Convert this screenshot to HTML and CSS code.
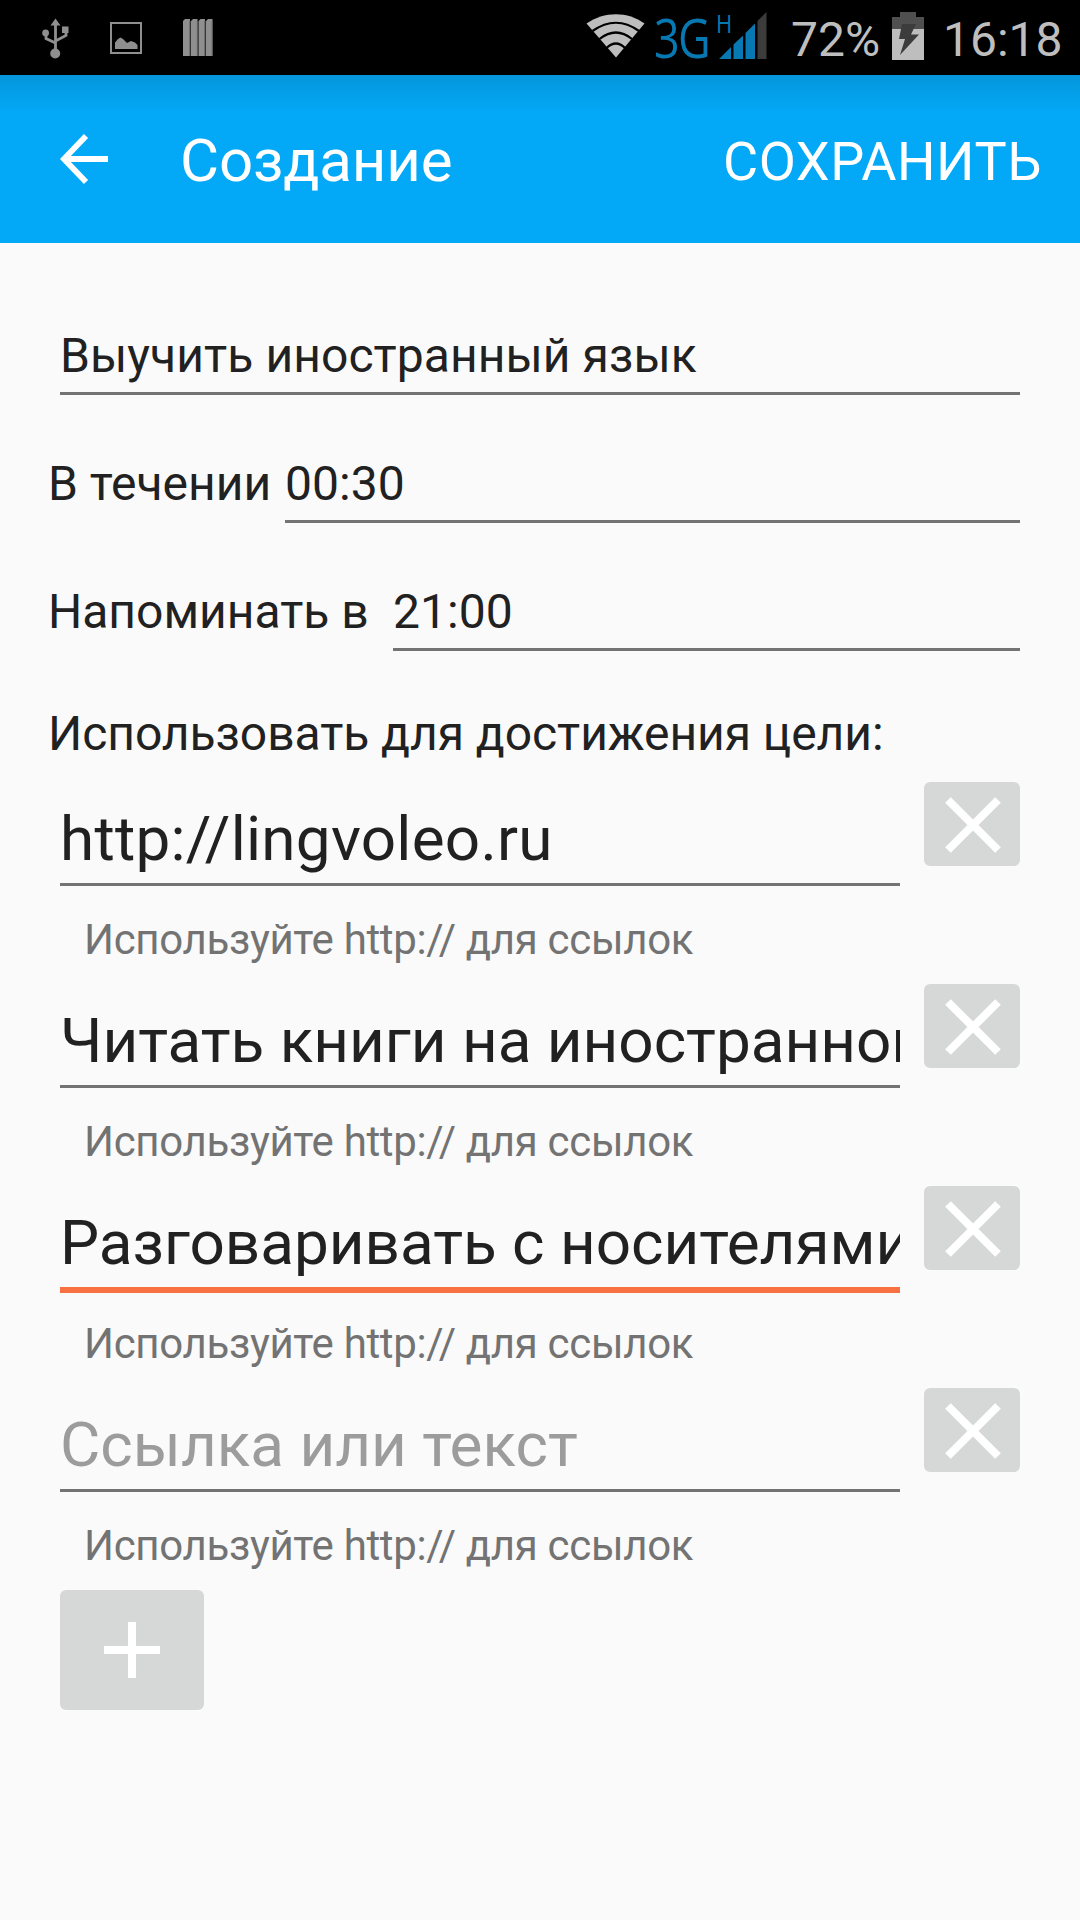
FILE: index.html
```html
<!DOCTYPE html>
<html lang="ru">
<head>
    <meta charset="UTF-8">
    <meta name="viewport" content="width=device-width, initial-scale=1.0">
    <title>Создание</title>
    <link rel="stylesheet" href="styles.css">
</head>
<body>
    <div class="status-bar">
        <svg class="icon-usb" width="28" height="42" viewBox="0 0 28 42">
            <path d="M13.5 38V6M13.5 25L4 20.500V14M13.500 23L24 17.500V12" fill="none" stroke="#8f8f8f" stroke-width="2.800"/>
            <path d="M13.500 0.500L18.500 7.500H8.500ZM20 8.500h6.500v6.500H20Z" fill="#8f8f8f"/>
            <circle cx="3.600" cy="15" r="3.400" fill="#8f8f8f"/>
            <circle cx="13.200" cy="35.500" r="5" fill="#8f8f8f"/>
        </svg>
        <svg class="icon-picture" width="32" height="32" viewBox="0 0 32 32">
            <rect x="1" y="1" width="30" height="30" fill="none" stroke="#8f8f8f" stroke-width="2"/>
            <path d="M5 27V20.500L8 17l2.500-1.500L13 17l4 4 4-2 4 1.500 2.500 2.500V27Z" fill="#8f8f8f"/>
        </svg>
        <svg class="icon-bars" width="30" height="38" viewBox="0 0 30 38">
            <path d="M0 37V2L2 0H7V37ZM8 37V2l2-2h4.500V37ZM15.500 37V2l2-2H22V37ZM23 37V2l2-2h4.500V37Z" fill="#8f8f8f"/>
            <path d="M7 2V37M14.500 2V37M22 2V37M29.300 2V37" stroke="#5c5c5c" stroke-width="1.200"/>
        </svg>
        <svg class="icon-wifi" width="60" height="44" viewBox="0 0 60 44">
            <path d="M30 43.500L0.500 9.500C18-3 42-3 58.500 9.500Z" fill="#bebebe"/>
            <path d="M6.500 17Q30 0.500 53 17M13.500 25Q30 12 46 25M20.500 34Q30 25 39 34" fill="none" stroke="#000" stroke-width="2.200"/>
        </svg>
        <span class="network">3G</span>
        <div class="signal">
            <span class="signal-type">H</span>
            <svg width="49" height="48" viewBox="0 0 49 48">
                <path d="M0 47L12 35V47ZM14.500 47V32.500L24 23.500V47ZM26.500 47V21L36 11.500V47Z" fill="#0878b2"/>
                <path d="M38.500 47V9L47.500 0V47Z" fill="#3c3c3c"/>
            </svg>
        </div>
        <span class="battery-level">72%</span>
        <svg class="icon-battery" width="32" height="48" viewBox="0 0 32 48">
            <path d="M8 0H24V5H32V17H0V5H8Z" fill="#4f4f4f"/>
            <rect y="17" width="32" height="31" fill="#bebebe"/>
            <path d="M10 12H24L19 22.500H27L8 43L13 27H7Z" fill="#3c3c3c"/>
        </svg>
        <span class="clock">16:18</span>
    </div>

    <header class="toolbar">
        <svg class="icon-back" width="48" height="50" viewBox="0 0 48 50">
            <path d="M48 25H5M26 2L4 25L26 48" fill="none" stroke="#fff" stroke-width="5.800"/>
        </svg>
        <h1 class="title">Создание</h1>
        <span class="save">СОХРАНИТЬ</span>
    </header>

    <main class="form">
        <div class="field">Выучить иностранный язык</div>

        <div class="row">
            <label class="row-label duration">В течении</label>
            <div class="field">00:30</div>
        </div>
        <div class="row">
            <label class="row-label reminder">Напоминать в</label>
            <div class="field">21:00</div>
        </div>

        <div class="section-label">Использовать для достижения цели:</div>

        <div class="item">
            <div class="item-text">
                <div class="field big link">http://lingvoleo.ru</div>
                <div class="hint">Используйте http:// для ссылок</div>
            </div>
            <div class="btn remove">
                <svg width="56" height="56" viewBox="0 0 56 56"><path d="M3 3L53 53M53 3L3 53" stroke="#fff" stroke-width="8"/></svg>
            </div>
        </div>
        <div class="item">
            <div class="item-text">
                <div class="field big">Читать книги на иностранном</div>
                <div class="hint">Используйте http:// для ссылок</div>
            </div>
            <div class="btn remove">
                <svg width="56" height="56" viewBox="0 0 56 56"><path d="M3 3L53 53M53 3L3 53" stroke="#fff" stroke-width="8"/></svg>
            </div>
        </div>
        <div class="item">
            <div class="item-text">
                <div class="field big focused">Разговаривать с носителями</div>
                <div class="hint">Используйте http:// для ссылок</div>
            </div>
            <div class="btn remove">
                <svg width="56" height="56" viewBox="0 0 56 56"><path d="M3 3L53 53M53 3L3 53" stroke="#fff" stroke-width="8"/></svg>
            </div>
        </div>
        <div class="item">
            <div class="item-text">
                <div class="field big placeholder">Ссылка или текст</div>
                <div class="hint">Используйте http:// для ссылок</div>
            </div>
            <div class="btn remove">
                <svg width="56" height="56" viewBox="0 0 56 56"><path d="M3 3L53 53M53 3L3 53" stroke="#fff" stroke-width="8"/></svg>
            </div>
        </div>

        <div class="btn add">
            <svg width="56" height="56" viewBox="0 0 56 56"><path d="M28 0V56M0 28H56" stroke="#fff" stroke-width="8"/></svg>
        </div>
    </main>
</body>
</html>
```
FILE: styles.css
```css
* { box-sizing: border-box; }
body { margin: 0; width: 1080px; height: 1920px; overflow: hidden; background: #fafafa; color: #212121; font-family: Roboto, sans-serif; font-size: 48px; line-height: 56px; white-space: nowrap; }
svg { display: block; flex: none; }

/* status bar */
.status-bar { display: flex; align-items: flex-start; height: 75px; padding-left: 42px; background: #000; color: #bebebe; }
.icon-usb { margin-top: 18px; }
.icon-picture { margin: 22px 0 0 40px; }
.icon-bars { margin: 19px 0 0 41px; }
.icon-wifi { margin: 14px 0 0 373px; }
.network { width: 63px; margin: 9px 0 0 8px; color: #0878b2; font-family: "Open Sans", sans-serif; font-size: 54px; letter-spacing: -2px; transform: scaleX(.83); transform-origin: left; }
.signal { position: relative; width: 49px; margin: 12px 0 0 2px; }
.signal-type { position: absolute; left: -4px; top: -4px; color: #0878b2; font-family: "Open Sans", sans-serif; font-size: 25px; line-height: 30px; transform: scaleX(.88); }
.battery-level { width: 100px; margin: 12px 0 0 23px; }
.icon-battery { margin: 12px 0 0 1px; }
.clock { margin: 12px 0 0 19px; }

/* toolbar */
.toolbar { display: flex; align-items: center; height: 168px; padding: 0 38px 0 60px; background: linear-gradient(#0496dc, #03a9f7 38px); color: #fff; }
.title { margin: 4px 0 0 72px; font-size: 60px; font-weight: 400; line-height: 70px; letter-spacing: -.15px; }
.save { margin: 6px 0 0 auto; font-size: 54px; letter-spacing: .55px; }

/* form */
.form { padding: 84px 60px 0; }
.field { flex: 1; height: 68px; padding-top: 1px; border-bottom: 3px solid #737373; overflow: hidden; letter-spacing: .08px; }
.row { display: flex; margin: 60px 0 0 -12px; }
.row-label { padding-top: 1px; }
.duration { width: 237px; }
.reminder { width: 345px; }
.section-label { margin: 55px 0 20px -12px; letter-spacing: -.06px; }
.item { display: flex; justify-content: space-between; height: 202px; }
.item-text { width: 840px; }
.big { height: 104px; padding-top: 22px; font-size: 62px; line-height: 70px; letter-spacing: 0; }
.link { letter-spacing: .25px; }
.focused { height: 107px; margin-bottom: -3px; border-bottom: 6px solid #f87143; }
.placeholder { color: #9c9c9c; }
.hint { margin: 29px 0 0 24px; color: #737373; font-size: 42px; line-height: 50px; letter-spacing: -.33px; }
.focused + .hint { margin-top: 29px; }
.btn { display: flex; align-items: center; justify-content: center; background: #d6d8d7; border-radius: 6px; }
.remove { width: 96px; height: 84px; padding: 2px 0 0 2px; }
.add { width: 144px; height: 120px; }
```
